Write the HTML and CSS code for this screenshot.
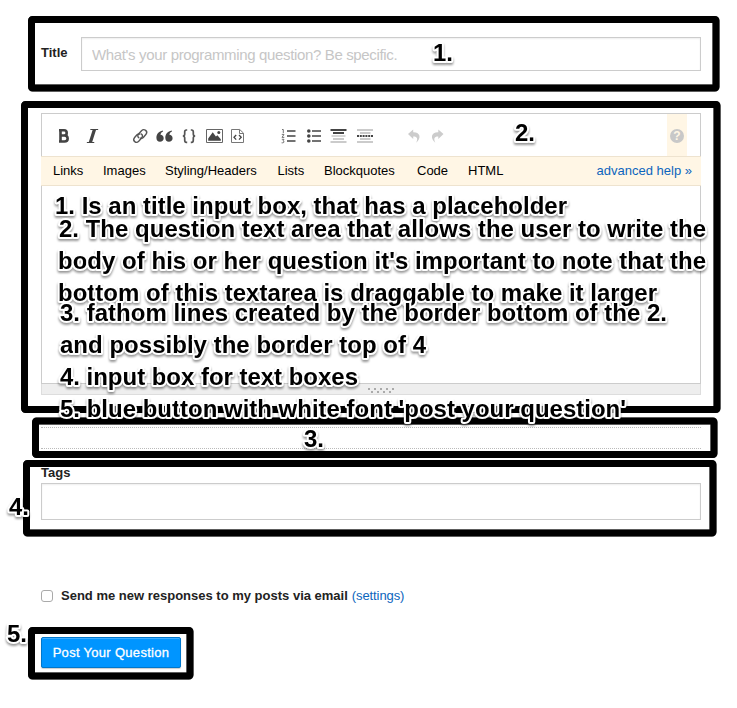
FILE: index.html
```html
<!DOCTYPE html>
<html lang="en">
<head>
<meta charset="utf-8">
<title>Ask a question</title>
<link rel="stylesheet" href="styles.css">
</head>
<body>
<form class="ask">
  <div class="title-row">
    <label class="label" for="title">Title</label>
    <input class="field title-input" id="title" type="text" placeholder="What's your programming question? Be specific.">
  </div>

  <section class="editor">
    <div class="toolbar">
      <svg class="icons" width="420" height="42" viewBox="42 114 420 42">
        <g fill="none" stroke="#444" stroke-width="2.6">
          <path d="M59 130.3h5c3.6 0 3.6 5.2 0 5.2h-4M60 135.5h4.5c4.2 0 4.2 6 0 6H59M60.5 129v13.8"/>
        </g>
        <path d="M90.5 129h7.8l-.3 1.1h-2l-3.8 11.8h2.2l-.3 1.1h-7.4l.3-1.1h1.8l3.8-11.8h-2.4z" fill="#444"/>
        <g fill="none" stroke="#555" stroke-width="1.4" stroke-linecap="round">
          <path d="M138.8 137.7c-1.5-1.1-1.2-2.7 0-4l2.7-3c2.7-2.6 6.8.6 4.5 3.6l-2.7 3.1c-.8.8-1.9 1-2.9.7"/>
          <path d="M141.4 134c1.5 1.1 1.3 2.7.2 4l-2.9 3.3c-2.6 2.6-6.5-.5-4.3-3.5l2.6-3c.8-.8 1.7-1 2.8-.8"/>
        </g>
        <g fill="#444">
          <path d="M162.8 130.4c-4 .8-6.4 3.7-6.4 7.3 0 2.4 1.4 4 3.6 4 2.1 0 3.7-1.5 3.7-3.5 0-1.9-1.4-3.3-3.2-3.4.2-1.7 1-2.8 2.6-3.4z"/>
          <path d="M171.7 130.4c-4 .8-6.4 3.7-6.4 7.3 0 2.4 1.4 4 3.6 4 2.1 0 3.7-1.5 3.7-3.5 0-1.9-1.4-3.3-3.2-3.4.2-1.7 1-2.8 2.6-3.4z"/>
        </g>
        <g fill="none" stroke="#555" stroke-width="1.7">
          <path d="M187.2 130h-.8c-1.6 0-1.7.9-1.7 2v1.9c0 1.4-.6 2.1-1.9 2.1 1.3 0 1.9.7 1.9 2.1v1.9c0 1.3.1 2.4 1.7 2.4h.8"/>
          <path d="M190.8 130h.8c1.6 0 1.7.9 1.7 2v1.9c0 1.4.6 2.1 1.9 2.1-1.3 0-1.9.7-1.9 2.1v1.9c0 1.3-.1 2.4-1.7 2.4h-.8"/>
        </g>
        <path d="M206.5 129.5h16v13h-16z" fill="#fff" stroke="#666"/>
        <path d="M208.2 140.8v-2.2l4.5-6.3 3.2 4.3 1.5-1.4 3.4 4v1.6z" fill="#444"/>
        <circle cx="218.8" cy="132.6" r="1.5" fill="#444"/>
        <path d="M231.5 129.5h8.2l3.8 3.6v9.4h-12zM239.5 129.7v3.8h3.8" fill="none" stroke="#777"/>
        <path d="M236.2 135l-2.2 2.3 2.2 2.3M239 135l2.2 2.3-2.2 2.3" fill="none" stroke="#444" stroke-width="1.3"/>

        <path d="M287 131h8.5M287 136h8.5M287 141h8.5" stroke="#444" stroke-width="1.6"/>
        <path d="M282 129.5h1.3v3.6M281.8 134.4h2.2l-2 3h2.3M281.8 139.3h2.2l-1 1.5c1.5.3 1.3 2-.2 2h-1.2" fill="none" stroke="#666" stroke-width=".9"/>
        <path d="M312 131h9M312 136h9M312 141h9" stroke="#444" stroke-width="1.7"/>
        <g fill="#444"><circle cx="308.8" cy="131" r="1.8"/><circle cx="308.8" cy="136" r="1.8"/><circle cx="308.8" cy="141" r="1.8"/></g>
        <path d="M330.5 130h16M333 133h11" stroke="#444" stroke-width="2"/>
        <path d="M333 139h11M330.5 142h16" stroke="#bbb" stroke-width="1.6"/>
        <path d="M331.5 136h14" stroke="#bbb" stroke-width="1.2"/>
        <path d="M357 130h16M360 133h10.5M360 139h10.5M357 142h16" stroke="#bbb" stroke-width="1.7"/>
        <path d="M357 136h16.5" stroke="#444" stroke-width="2" stroke-dasharray="2 .8"/>
        <path d="M408 134l5.2-4.4v2.7c7.3-.2 8.3 6 3 10.4 2-4.2.9-6.4-3-6.2v2.4z" fill="#ccc"/>
        <path d="M443.5 134l-5.2-4.4v2.7c-7.3-.2-8.3 6-3 10.4-2-4.2-.9-6.4 3-6.2v2.4z" fill="#ccc"/>
      </svg>
      <span class="help"><span class="help-mark">?</span></span>
    </div>
    <nav class="help-bar">
      <span class="topic links">Links</span>
      <span class="topic images">Images</span>
      <span class="topic styling">Styling/Headers</span>
      <span class="topic lists">Lists</span>
      <span class="topic quotes">Blockquotes</span>
      <span class="topic code">Code</span>
      <span class="topic">HTML</span>
      <a class="link advanced">advanced help »</a>
    </nav>
    <div class="body-input"></div>
    <div class="grip">
      <svg width="30" height="8" viewBox="0 0 30 8" fill="#aaa">
        <path d="M2 0h2v2H2zM8 0h2v2H8zM14 0h2v2h-2zM20 0h2v2h-2zM26 0h2v2h-2zM5 3h2v2H5zM11 3h2v2h-2zM17 3h2v2h-2zM23 3h2v2h-2z"/>
      </svg>
    </div>
  </section>

  <div class="preview"></div>

  <label class="label tags-label" for="tags">Tags</label>
  <input class="field tags-input" id="tags" type="text">

  <div class="notify">
    <span class="checkbox"></span>
    <span class="label notify-label">Send me new responses to my posts via email</span>
    <a class="link settings">(settings)</a>
  </div>

  <button class="submit" type="button">Post Your Question</button>
</form>

<svg class="notes" width="737" height="708" viewBox="0 0 737 708">
  <g class="frame">
    <rect x="31.5" y="19.5" width="684.5" height="68.5" rx="1"/>
    <rect x="24.5" y="104.5" width="692.5" height="305" rx="1"/>
    <rect x="35.5" y="421" width="678.5" height="33.5" rx="1"/>
    <rect x="26.5" y="463.5" width="686.5" height="69.5" rx="1"/>
    <rect x="31.5" y="630.5" width="158.5" height="45.5" rx="1"/>
  </g>
  <g class="note">
    <text x="433" y="61" textLength="20">1.</text>
    <text x="515" y="141" textLength="20">2.</text>
    <text x="304" y="447" textLength="20">3.</text>
    <text x="9" y="515" textLength="20">4.</text>
    <text x="7" y="642" textLength="20">5.</text>
    <text x="55" y="214" textLength="512">1. Is an title input box, that has a placeholder</text>
    <text x="59" y="237" textLength="647">2. The question text area that allows the user to write the</text>
    <text x="58" y="269" textLength="648">body of his or her question it's important to note that the</text>
    <text x="58" y="301" textLength="599">bottom of this textarea is draggable to make it larger</text>
    <text x="60" y="321" textLength="607">3. fathom lines created by the border bottom of the 2.</text>
    <text x="60" y="353" textLength="366">and possibly the border top of 4</text>
    <text x="60" y="385" textLength="298">4. input box for text boxes</text>
    <text x="60" y="417" textLength="566">5. blue button with white font 'post your question'</text>
  </g>
</svg>
</body>
</html>
```
FILE: styles.css
```css
* { box-sizing: border-box; }
body {
  margin: 0;
  width: 737px;
  height: 708px;
  overflow: hidden;
  background: #fff;
  color: #000;
  font: 13px/16px "Liberation Sans", Arial, sans-serif;
}
.ask { padding: 37px 36px 0 41px; }
.label { font-weight: bold; color: #222; }
.field {
  display: block;
  border: 1px solid #ccc;
  border-radius: 0;
  background: #fff;
  box-shadow: inset 0 1px 2px #eee;
  outline: 0;
  font: 15px "Liberation Sans", Arial, sans-serif;
}
.title-row { display: flex; }
.title-row .label { width: 40px; padding-top: 8px; }
.title-input { width: 620px; height: 34px; padding: 0 10px; letter-spacing: -0.35px; }
.title-input::placeholder { color: #c6c6c6; opacity: 1; }
.editor { width: 660px; margin-top: 42px; border: 1px solid #ccc; border-bottom: 0; }
.toolbar { display: flex; justify-content: space-between; height: 42px; }
.icons { display: block; }
.help {
  display: flex;
  align-items: center;
  justify-content: center;
  width: 20px;
  height: 42px;
  margin-right: 13px;
  padding-top: 2px;
  background: #fff6e5;
}
.help-mark {
  width: 14px;
  height: 14px;
  border-radius: 50%;
  background: #c8c8c8;
  color: #fff6e5;
  font: bold 12px/14px "Liberation Sans", Arial, sans-serif;
  text-align: center;
}
.help-bar {
  display: flex;
  height: 30px;
  margin: 0 -1px;
  padding: 6px 9px 0 12px;
  border: 1px solid #eee3cf;
  border-width: 1px 0;
  background: #fff6e5;
}
.topic { white-space: nowrap; }
.links { width: 50px; }
.images { width: 62px; }
.styling { width: 112.5px; }
.lists { width: 46.5px; }
.quotes { width: 93px; }
.code { width: 51px; }
.link { color: #0c65bd; }
.advanced { margin-left: auto; }
.body-input { height: 198px; border-bottom: 1px solid #ccc; }
.grip {
  height: 11px;
  padding: 4px 0 0 324px;
  margin: 0 -1px;
  border: 1px solid #ddd;
  border-top: 0;
  background: #eee;
}
.grip svg { display: block; }
.preview {
  width: 660px;
  height: 22px;
  margin-top: 32px;
  border: 1px dotted #bbb;
  border-width: 1px 0;
}
.tags-label { display: block; margin-top: 16px; }
.tags-input { width: 660px; height: 37px; margin-top: 2px; }
.notify { display: flex; align-items: center; height: 16px; margin-top: 68px; }
.checkbox { width: 12px; height: 12px; border: 1px solid #aaa; border-radius: 3px; }
.notify-label { margin: 0 4px 0 8px; }
.settings { letter-spacing: -0.1px; }
.submit {
  display: block;
  width: 140px;
  height: 31px;
  margin-top: 33px;
  padding: 0;
  border: 1px solid #0077cc;
  border-radius: 2px;
  background: #0095ff;
  box-shadow: inset 0 1px 0 #3faeff, 0 1px 1px #ccc;
  color: #fff;
  font: 13px/29px "Liberation Sans", Arial, sans-serif;
  letter-spacing: 0.3px;
  -webkit-text-stroke: 0.3px #fff;
}
/* Annotation layer drawn above the form */
.notes { position: absolute; top: 0; left: 0; pointer-events: none; }
.frame { fill: none; stroke: #000; stroke-width: 7px; stroke-linejoin: round; filter: drop-shadow(0 0 0.5px #777); }
.note text {
  font: bold 24px "Liberation Sans", Arial, sans-serif;
  fill: #000;
  stroke: #fff;
  stroke-width: 4px;
  stroke-linejoin: round;
  paint-order: stroke;
  filter: drop-shadow(0 2px 1px rgba(0, 0, 0, 0.4));
}
```
